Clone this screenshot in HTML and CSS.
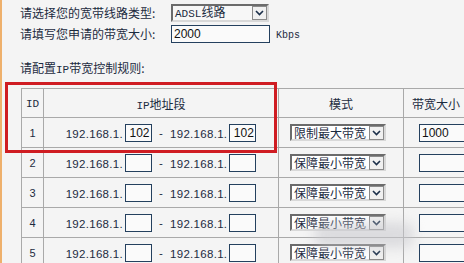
FILE: index.html
```html
<!DOCTYPE html>
<html lang="zh-CN">

<head>
    <meta charset="UTF-8">
    <meta name="viewport" content="width=device-width, initial-scale=1.0">
    <title>IP带宽控制</title>
    <link rel="stylesheet" href="styles.css">
</head>

<body>
    <div class="page">
        <div class="form-row">
            <span class="label">请选择您的宽带线路类型:</span>
            <div class="select select-line">
                <span class="select-text"><span class="latin">ADSL</span>线路</span>
                <span class="arrow"><svg width="9" height="6" viewBox="0 0 9 6"><path d="M1 1 L4.5 4.5 L8 1" fill="none" stroke="#1b2f4a" stroke-width="1.6"/></svg></span>
            </div>
        </div>
        <div class="form-row">
            <span class="label">请填写您申请的带宽大小:</span>
            <div class="input input-wide">2000</div>
            <span class="unit">Kbps</span>
        </div>

        <div class="rules-title">请配置<span class="latin">IP</span>带宽控制规则:</div>

        <div class="table-wrap">
            <table class="rules">
                <tr class="head">
                    <th class="col-id"><span class="latin">ID</span></th>
                    <th class="col-ip"><span class="latin">IP</span>地址段</th>
                    <th class="col-mode">模式</th>
                    <th class="col-bw">带宽大小</th>
                </tr>
                <tr>
                    <td class="col-id">1</td>
                    <td class="col-ip"><span class="ip">192.168.1.</span><span class="input small">102</span><span class="dash">-</span><span class="ip">192.168.1.</span><span class="input small">102</span></td>
                    <td class="col-mode"><div class="select select-mode"><span class="select-text">限制最大带宽</span><span class="arrow"><svg width="9" height="6" viewBox="0 0 9 6"><path d="M1 1 L4.5 4.5 L8 1" fill="none" stroke="#1b2f4a" stroke-width="1.6"/></svg></span></div></td>
                    <td class="col-bw"><span class="input bw">1000</span></td>
                </tr>
                <tr>
                    <td class="col-id">2</td>
                    <td class="col-ip"><span class="ip">192.168.1.</span><span class="input small"></span><span class="dash">-</span><span class="ip">192.168.1.</span><span class="input small"></span></td>
                    <td class="col-mode"><div class="select select-mode"><span class="select-text">保障最小带宽</span><span class="arrow"><svg width="9" height="6" viewBox="0 0 9 6"><path d="M1 1 L4.5 4.5 L8 1" fill="none" stroke="#1b2f4a" stroke-width="1.6"/></svg></span></div></td>
                    <td class="col-bw"><span class="input bw"></span></td>
                </tr>
                <tr>
                    <td class="col-id">3</td>
                    <td class="col-ip"><span class="ip">192.168.1.</span><span class="input small"></span><span class="dash">-</span><span class="ip">192.168.1.</span><span class="input small"></span></td>
                    <td class="col-mode"><div class="select select-mode"><span class="select-text">保障最小带宽</span><span class="arrow"><svg width="9" height="6" viewBox="0 0 9 6"><path d="M1 1 L4.5 4.5 L8 1" fill="none" stroke="#1b2f4a" stroke-width="1.6"/></svg></span></div></td>
                    <td class="col-bw"><span class="input bw"></span></td>
                </tr>
                <tr>
                    <td class="col-id">4</td>
                    <td class="col-ip"><span class="ip">192.168.1.</span><span class="input small"></span><span class="dash">-</span><span class="ip">192.168.1.</span><span class="input small"></span></td>
                    <td class="col-mode"><div class="select select-mode"><span class="select-text">保障最小带宽</span><span class="arrow"><svg width="9" height="6" viewBox="0 0 9 6"><path d="M1 1 L4.5 4.5 L8 1" fill="none" stroke="#1b2f4a" stroke-width="1.6"/></svg></span></div></td>
                    <td class="col-bw"><span class="input bw"></span></td>
                </tr>
                <tr>
                    <td class="col-id">5</td>
                    <td class="col-ip"><span class="ip">192.168.1.</span><span class="input small"></span><span class="dash">-</span><span class="ip">192.168.1.</span><span class="input small"></span></td>
                    <td class="col-mode"><div class="select select-mode"><span class="select-text">保障最小带宽</span><span class="arrow"><svg width="9" height="6" viewBox="0 0 9 6"><path d="M1 1 L4.5 4.5 L8 1" fill="none" stroke="#1b2f4a" stroke-width="1.6"/></svg></span></div></td>
                    <td class="col-bw"><span class="input bw"></span></td>
                </tr>
            </table>
        </div>

        <!-- annotation box drawn over the first rule -->
        <div class="highlight"></div>
        <div class="watermark"></div>
    </div>
</body>

</html>
```

FILE: styles.css
```css
html,
body {
    margin: 0;
    padding: 0;
    overflow: hidden;
    background-color: #f4f4f4;
}

body {
    width: 464px;
    height: 263px;
    font-family: "Noto Sans CJK SC", "Liberation Sans", sans-serif;
    font-size: 12px;
    color: #1c2b3f;
}

.page {
    position: relative;
    height: 263px;
    padding: 4px 0 0 18px;
    border-left: 2px solid #eeb06c;
    box-sizing: border-box;
    overflow: hidden;
}

.latin {
    font-family: "Liberation Mono", monospace;
    font-size: 11px;
}

.form-row {
    display: flex;
    align-items: center;
    height: 18px;
    margin-bottom: 3px;
}

.label {
    width: 151px;
    line-height: 12px;
}

.unit {
    margin-left: 6px;
    font-family: "Liberation Mono", monospace;
    font-size: 10px;
    padding-top: 2px;
}

.select {
    display: flex;
    align-items: center;
    justify-content: space-between;
    box-sizing: border-box;
    background-color: #fff;
    border: 2px solid;
    border-color: #6b6b6b #d8d8d8 #d8d8d8 #6b6b6b;
}

.select-line {
    width: 98px;
    height: 18px;
    background-color: #f7f7f7;
}

.select-text {
    padding-left: 2px;
    line-height: 13px;
    white-space: nowrap;
}

.arrow {
    display: flex;
    align-items: center;
    justify-content: center;
    flex-shrink: 0;
    width: 15px;
    height: 14px;
    box-sizing: border-box;
    border: 1px solid #8a8a8a;
    background-color: #f0f0f0;
}

.input {
    display: inline-block;
    box-sizing: border-box;
    border: 1px solid #24405e;
    background-color: #fafafa;
    font-family: "Liberation Sans", sans-serif;
    font-size: 12px;
    line-height: 16px;
    padding-left: 2px;
    vertical-align: middle;
    color: #111;
}

.input-wide {
    width: 99px;
    height: 18px;
}

.rules-title {
    margin-top: 19px;
    line-height: 12px;
    height: 12px;
}

.table-wrap {
    width: 460px;
    overflow: hidden;
}

.rules {
    margin: 14px 0 0 1px;
    border-collapse: collapse;
    table-layout: fixed;
    width: 470px;
}

.rules th,
.rules td {
    border: 1px solid #a9a9a9;
    padding: 0;
    text-align: center;
    vertical-align: middle;
    font-weight: normal;
    white-space: nowrap;
}

.rules tr {
    height: 30px;
}

.rules tr.head {
    height: 29px;
}

.col-id {
    width: 21px;
    font-family: "Liberation Sans", sans-serif;
    font-size: 11px;
}

.col-ip {
    width: 234px;
}

.col-mode {
    width: 124px;
}

.rules th.col-bw {
    text-align: left;
    padding-left: 8px;
}

.rules td.col-bw {
    text-align: left;
    padding-left: 15px;
}

.ip {
    font-family: "Liberation Sans", sans-serif;
    font-size: 11.5px;
    letter-spacing: 0.3px;
    vertical-align: middle;
}

.dash {
    display: inline-block;
    width: 18px;
    text-align: center;
    font-family: "Liberation Sans", sans-serif;
    font-size: 11.5px;
    vertical-align: middle;
}

.input.small {
    width: 27px;
    height: 18px;
    margin-left: 2px;
}

.select-mode {
    width: 96px;
    height: 17px;
    margin-left: 11px;
}

.input.bw {
    width: 52px;
    height: 18px;
}

.highlight {
    position: absolute;
    left: 3px;
    top: 82px;
    width: 272px;
    height: 71px;
    box-sizing: border-box;
    border: 3px solid #cf1c22;
}

.watermark {
    position: absolute;
    left: 312px;
    top: 222px;
    width: 100px;
    height: 26px;
    border-radius: 12px;
    background-color: rgba(200, 200, 205, 0.55);
    filter: blur(6px);
}
```
